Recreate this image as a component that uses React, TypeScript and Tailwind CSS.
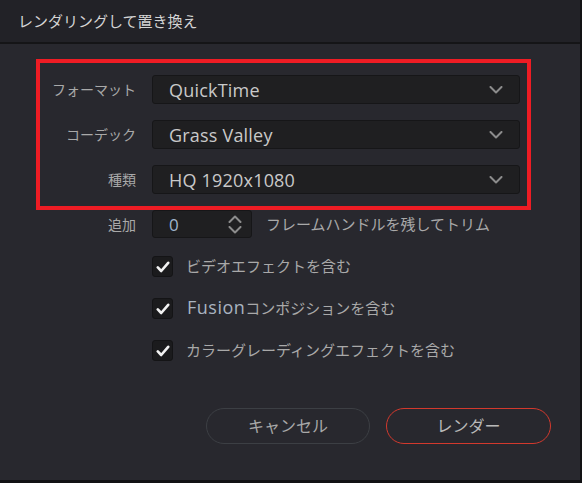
import type { ReactNode } from "react";

const font = { fontFamily: '"Open Sans", "Noto Sans CJK JP", sans-serif' };

function Chevron({ up = false, className = "" }: { up?: boolean; className?: string }) {
  return (
    <svg width="14" height="8" viewBox="0 0 14 8" className={className}>
      <path
        d={up ? "M1.5 7 L7 1.5 L12.5 7" : "M1.5 1 L7 6.5 L12.5 1"}
        fill="none"
        stroke="#8c8c8c"
        strokeWidth="2"
        strokeLinecap="round"
        strokeLinejoin="round"
      />
    </svg>
  );
}

function SelectRow({ label, value }: { label: string; value: string }) {
  return (
    <div className="flex items-center gap-4">
      <div className="w-[96px] text-right text-[14px] text-[#a9a9a9]">{label}</div>
      <div className="flex h-[29px] flex-1 items-center justify-between rounded-[3px] border border-[#161618] bg-[#1f1f21] pl-4 pr-4">
        <span className="text-[18px] leading-none tracking-[0.2px] text-[#c9c9c9]">{value}</span>
        <Chevron />
      </div>
    </div>
  );
}

function Check({ children }: { children: ReactNode }) {
  return (
    <div className="flex h-[21px] items-center gap-[13px] pl-[152px]">
      <div className="flex h-[21px] w-[21px] items-center justify-center rounded-[3px] border border-[#141416] bg-[#1b1b1d]">
        <svg width="14" height="12" viewBox="0 0 14 12">
          <path
            d="M1.8 6.4 L5.2 10 L12.2 1.8"
            fill="none"
            stroke="#f2f2f2"
            strokeWidth="2.6"
            strokeLinecap="round"
            strokeLinejoin="round"
          />
        </svg>
      </div>
      <span className="text-[15px] text-[#a9a9a9]">{children}</span>
    </div>
  );
}

export default function App() {
  return (
    <div
      style={font}
      className="flex h-[483px] w-[582px] flex-col overflow-hidden border-b-[3px] border-r-2 border-[#121214] bg-[#28282e]"
    >
      <div className="flex h-[44px] shrink-0 items-center border-b-2 border-[#151517] bg-[#222227] pl-[18px]">
        <span className="text-[15px] text-[#d4d4d4]">レンダリングして置き換え</span>
      </div>

      <div className="ml-[36px] mt-[15px] flex w-[495px] flex-col gap-4 border-4 border-[#ee1c24] py-3 pl-0 pr-[7px]">
        <SelectRow label="フォーマット" value="QuickTime" />
        <SelectRow label="コーデック" value="Grass Valley" />
        <SelectRow label="種類" value="HQ 1920x1080" />
      </div>

      <div className="flex items-center">
        <div className="w-[136px] text-right text-[14px] text-[#a9a9a9]">追加</div>
        <div className="ml-4 flex h-[28px] w-[100px] items-center justify-between rounded-[3px] border border-[#161618] bg-[#1f1f21] pl-4 pr-[9px]">
          <span className="text-[17px] leading-none text-[#9fb4cc]">0</span>
          <div className="flex flex-col gap-[3px]">
            <Chevron up />
            <Chevron />
          </div>
        </div>
        <span className="ml-[14px] text-[15px] text-[#a9a9a9]">フレームハンドルを残してトリム</span>
      </div>

      <div className="mt-[18px] flex flex-col gap-[21px]">
        <Check>ビデオエフェクトを含む</Check>
        <Check>
          <span className="ml-[1px] text-[18px] leading-none tracking-[0.5px] text-[#a9b3c0]">Fusion</span>コンポジションを含む
        </Check>
        <Check>カラーグレーディングエフェクトを含む</Check>
      </div>

      <div className="mt-[47px] flex gap-4 pl-[206px]">
        <button className="h-[36px] w-[164px] rounded-full border border-[#3c3f44] text-[16px] text-[#a9a9a9]">
          キャンセル
        </button>
        <button className="h-[36px] w-[165px] rounded-full border border-[#d2392d] text-[16px] text-[#b9b9b9]">
          レンダー
        </button>
      </div>
    </div>
  );
}
